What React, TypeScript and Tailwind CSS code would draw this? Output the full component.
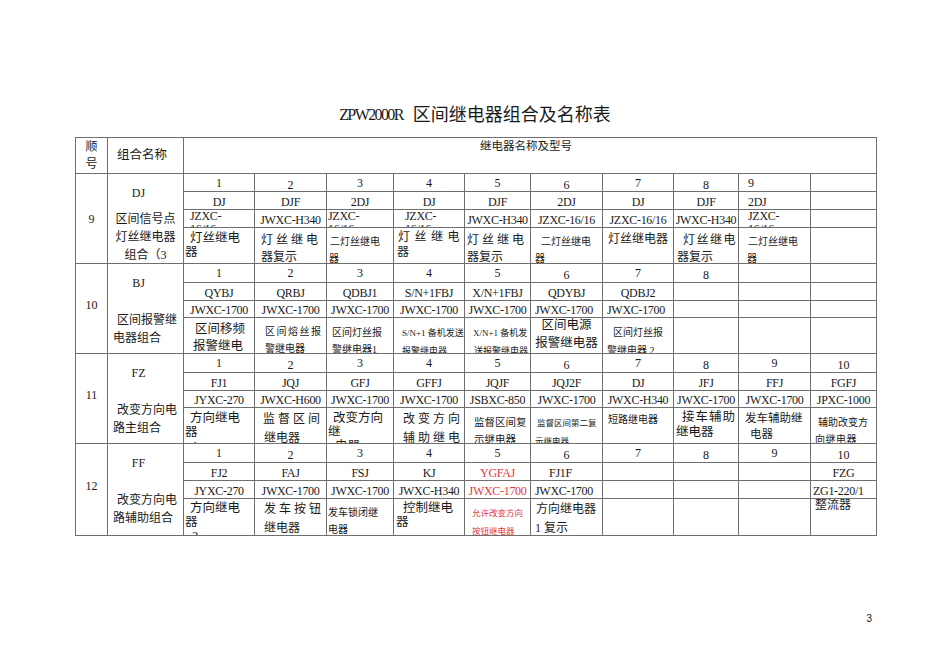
import React from "react";

type Cell = { t?: React.ReactNode; c?: string };

const B = "border-r border-b border-[#6f6f6f] overflow-hidden";
const RED = "text-[#e2383f]";

function NumCell({ t, c }: Cell) {
  return (
    <div className={`${B} flex text-[12px] leading-[14px] ${c ?? "items-center justify-center"}`}>{t}</div>
  );
}

function NameCell({ t, c }: Cell) {
  return (
    <div className={`${B} flex text-[12px] leading-[14px] tracking-[-0.3px] ${c ?? "items-end justify-center"}`}>
      {t}
    </div>
  );
}

function DescCell({ t }: Cell) {
  return <div className={`${B}`}>{t}</div>;
}

// JZXC-16/16 wrapping onto a clipped second line
const wrapModel = (pl: string): Cell => ({
  t: (
    <div className={`leading-[13px] ${pl}`}>
      <div>JZXC-</div>
      <div>16/16</div>
    </div>
  ),
  c: "items-start justify-start",
});

const low = "items-center justify-center pt-[4px]";

type Section = {
  no: string;
  noCls: string;
  code: string;
  name: React.ReactNode;
  nums: Cell[];
  names: Cell[];
  models: Cell[];
  descs: React.ReactNode[];
};

const n = (t: React.ReactNode, c?: string): Cell => ({ t, c });

const sections: Section[] = [
  {
    no: "9",
    noCls: "pt-[1px]",
    code: "DJ",
    name: (
      <div className="mt-[9px] text-center leading-[18px]">
        <div>区间信号点</div>
        <div>灯丝继电器</div>
        <div>组合（3</div>
      </div>
    ),
    nums: [n("1"), n("2", low), n("3"), n("4"), n("5"), n("6", low), n("7"), n("8", low), n("9", "items-center justify-start pl-[9px]"), n("")],
    names: [n("DJ"), n("DJF"), n("2DJ"), n("DJ"), n("DJF"), n("2DJ"), n("DJ"), n("DJF"), n("2DJ", "items-end justify-start pl-[9px]"), n("")],
    models: [
      wrapModel("pl-[6px]"),
      n("JWXC-H340"),
      wrapModel("pl-[1px]"),
      wrapModel("pl-[11px]"),
      n("JWXC-H340"),
      n("JZXC-16/16"),
      n("JZXC-16/16"),
      n("JWXC-H340"),
      wrapModel("pl-[9px]"),
      n(""),
    ],
    descs: [
      <div className="pt-[3px] text-[12.5px] leading-[14px]">
        <div className="pl-[6px]">灯丝继电</div>
        <div className="pl-[1px]">器</div>
      </div>,
      <div className="pt-[4px] pl-[6px] text-[12px] leading-[17px]">
        <div className="tracking-[3px]">灯丝继电</div>
        <div>器复示</div>
      </div>,
      <div className="pt-[5px] text-[10px] leading-[17px]">
        <div className="pl-[3px]">二灯丝继电</div>
        <div className="pl-[2px]">器</div>
      </div>,
      <div className="pt-[2px] text-[12px] leading-[15px]">
        <div className="pl-[4px] tracking-[4.5px]">灯丝继电</div>
        <div className="pl-[3px]">器</div>
      </div>,
      <div className="pt-[4px] pl-[2px] text-[12px] leading-[17px]">
        <div className="tracking-[3px]">灯丝继电</div>
        <div>器复示</div>
      </div>,
      <div className="pt-[5px] text-[10px] leading-[17px]">
        <div className="pl-[10px]">二灯丝继电</div>
        <div className="pl-[4px]">器</div>
      </div>,
      <div className="pt-[4px] pl-[5px] text-[12px] leading-[14px]">灯丝继电器</div>,
      <div className="pt-[4px] text-[12px] leading-[17px]">
        <div className="pl-[9px] tracking-[1.5px]">灯丝继电</div>
        <div className="pl-[3px]">器复示</div>
      </div>,
      <div className="pt-[5px] text-[10px] leading-[17px]">
        <div className="pl-[9px]">二灯丝继电</div>
        <div className="pl-[8px]">器</div>
      </div>,
      null,
    ],
  },
  {
    no: "10",
    noCls: "pb-[8px]",
    code: "BJ",
    name: (
      <div className="mt-[20px] leading-[18px]">
        <div className="pl-[9px]">区间报警继</div>
        <div className="pl-[5px]">电器组合</div>
      </div>
    ),
    nums: [n("1"), n("2"), n("3"), n("4"), n("5"), n("6", low), n("7"), n("8", low), n(""), n("")],
    names: [n("QYBJ"), n("QRBJ"), n("QDBJ1"), n("S/N+1FBJ"), n("X/N+1FBJ"), n("QDYBJ"), n("QDBJ2"), n(""), n(""), n("")],
    models: [
      n("JWXC-1700"),
      n("JWXC-1700"),
      n("JWXC-1700"),
      n("JWXC-1700"),
      n("JWXC-1700"),
      n("JWXC-1700", "items-end justify-start pl-[4px]"),
      n("JWXC-1700", "items-end justify-start pl-[4px]"),
      n(""),
      n(""),
      n(""),
    ],
    descs: [
      <div className="pt-[3px] text-[12.5px] leading-[17px]">
        <div className="pl-[11px]">区间移频</div>
        <div className="pl-[9px]">报警继电</div>
      </div>,
      <div className="pt-[5px] pl-[10px] text-[10px] leading-[17px]">
        <div className="tracking-[1.5px]">区间熔丝报</div>
        <div>警继电器</div>
      </div>,
      <div className="pt-[6px] pl-[5px] text-[10px] leading-[17px]">
        <div>区间灯丝报</div>
        <div>警继电器1</div>
      </div>,
      <div className="pt-[6px] pl-[8px] text-[9px] leading-[18px]">
        <div>S/N+1 备机发送</div>
        <div>报警继电器</div>
      </div>,
      <div className="pt-[6px] pl-[8px] text-[9px] leading-[18px]">
        <div>X/N+1 备机发</div>
        <div className="pl-[1px]">送报警继电器</div>
      </div>,
      <div className="-mt-[2px] text-center text-[12.5px] leading-[18px]">
        <div>区间电源</div>
        <div>报警继电器</div>
      </div>,
      <div className="pt-[6px] text-[10px] leading-[18px]">
        <div className="pl-[10px]">区间灯丝报</div>
        <div className="pl-[4px]">警继电器 2</div>
      </div>,
      null,
      null,
      null,
    ],
  },
  {
    no: "11",
    noCls: "pb-[8px]",
    code: "FZ",
    name: (
      <div className="mt-[20px] leading-[18px]">
        <div className="pl-[9px]">改变方向电</div>
        <div className="pl-[5px]">路主组合</div>
      </div>
    ),
    nums: [n("1"), n("2", low), n("3"), n("4"), n("5"), n("6", low), n("7"), n("8", low), n("9"), n("10", low)],
    names: [n("FJ1"), n("JQJ"), n("GFJ"), n("GFFJ"), n("JQJF"), n("JQJ2F"), n("DJ"), n("JFJ"), n("FFJ"), n("FGFJ")],
    models: [
      n("JYXC-270"),
      n("JWXC-H600"),
      n("JWXC-1700"),
      n("JWXC-1700"),
      n("JSBXC-850"),
      n("JWXC-1700"),
      n("JWXC-H340"),
      n("JWXC-1700"),
      n("JWXC-1700"),
      n("JPXC-1000"),
    ],
    descs: [
      <div className="pt-[3px] text-[12.5px] leading-[14px]">
        <div className="pl-[6px]">方向继电</div>
        <div className="pl-[1px]">器</div>
        <div className="pl-[8px]">1</div>
      </div>,
      <div className="pt-[2px] text-[12px] leading-[19px]">
        <div className="pl-[8px] tracking-[3px]">监督区间</div>
        <div className="pl-[9px]">继电器</div>
      </div>,
      <div className="pt-[3px] text-[12.5px] leading-[14px]">
        <div className="pl-[6px]">改变方向</div>
        <div className="pl-[1px]">继</div>
        <div className="pl-[8px]">电器</div>
      </div>,
      <div className="pt-[2px] pl-[9px] text-[12px] leading-[19px] tracking-[3px]">
        <div>改变方向</div>
        <div>辅助继电</div>
      </div>,
      <div className="pt-[6px] pl-[9px] text-[10.5px] leading-[17px]">
        <div>监督区间复</div>
        <div>示继电器</div>
      </div>,
      <div className="pt-[6px] text-[8.5px] leading-[18px]">
        <div className="pl-[6px]">监督区间第二复</div>
        <div className="pl-[4px]">示继电器</div>
      </div>,
      <div className="pt-[5px] pl-[5px] text-[10px] leading-[14px]">短路继电器</div>,
      <div className="pt-[2px] text-[12.5px] leading-[15px]">
        <div className="pl-[8px] tracking-[1px]">接车辅助</div>
        <div className="pl-[2px]">继电器</div>
      </div>,
      <div className="pt-[2px] text-[11.5px] leading-[16px]">
        <div className="pl-[6px]">发车辅助继</div>
        <div className="pl-[11px]">电器</div>
      </div>,
      <div className="pt-[6px] text-[10px] leading-[17px]">
        <div className="pl-[7px]">辅助改变方</div>
        <div className="pl-[4px] tracking-[0.5px]">向继电器</div>
      </div>,
    ],
  },
  {
    no: "12",
    noCls: "pb-[8px]",
    code: "FF",
    name: (
      <div className="mt-[20px] leading-[18px]">
        <div className="pl-[9px]">改变方向电</div>
        <div className="pl-[5px]">路辅助组合</div>
      </div>
    ),
    nums: [n("1"), n("2", low), n("3"), n("4"), n("5"), n("6", low), n("7"), n("8", low), n("9"), n("10", low)],
    names: [
      n("FJ2"),
      n("FAJ"),
      n("FSJ"),
      n("KJ"),
      n(<span className={RED}>YGFAJ</span>),
      n("FJ1F", "items-end justify-center pr-[12px]"),
      n(""),
      n(""),
      n(""),
      n("FZG"),
    ],
    models: [
      n("JYXC-270"),
      n("JWXC-1700"),
      n("JWXC-1700"),
      n("JWXC-H340"),
      n(<span className={RED}>JWXC-1700</span>),
      n("JWXC-1700", "items-end justify-start pl-[4px]"),
      n(""),
      n(""),
      n(""),
      n("ZG1-220/1", "items-end justify-start pl-[2px]"),
    ],
    descs: [
      <div className="pt-[2px] text-[12.5px] leading-[14px]">
        <div className="pl-[6px]">方向继电</div>
        <div className="pl-[1px]">器</div>
        <div className="pl-[8px]">2</div>
      </div>,
      <div className="pt-[1px] pl-[9px] text-[12px] leading-[19px]">
        <div className="tracking-[3px]">发车按钮</div>
        <div>继电器</div>
      </div>,
      <div className="pt-[5px] pl-[1px] text-[10px] leading-[17px]">
        <div>发车锁闭继</div>
        <div>电器</div>
      </div>,
      <div className="pt-[2px] text-[12.5px] leading-[14px]">
        <div className="pl-[9px]">控制继电</div>
        <div className="pl-[2px]">器</div>
      </div>,
      <div className={`pt-[5px] pl-[7px] text-[8.5px] leading-[18px] ${RED}`}>
        <div>允许改变方向</div>
        <div>按钮继电器</div>
      </div>,
      <div className="pt-[1px] text-[12px] leading-[19px]">
        <div className="pl-[5px]">方向继电器</div>
        <div className="pl-[4px]">1 复示</div>
      </div>,
      null,
      null,
      null,
      <div className="-mt-[1px] pl-[4px] text-[12px] leading-[14px]">整流器</div>,
    ],
  },
];

export default function App() {
  return (
    <div className="min-h-[672px] w-[950px] bg-white pt-[104px] font-['Liberation_Serif','Noto_Sans_CJK_SC',serif] text-[#1a1a1a]">
      <div className="mb-[11px] flex h-[22px] items-center justify-center text-[18px] leading-[22px]">
        <span className="mr-[10px] text-[16px] tracking-[-1.6px]">ZPW2000R</span>
        <span>区间继电器组合及名称表</span>
      </div>

      <div className="ml-[75px] grid w-[802px] grid-cols-[32px_76px_71px_72px_67px_71px_66px_72px_71px_65px_72px_66px] grid-rows-[36px_18px_18px_18px_36px_19px_18px_17px_36px_19px_18px_17px_36px_19px_18px_18px_37px] border-l border-t border-[#6f6f6f] text-[12px]">
        <div className={`${B} flex flex-col items-center justify-center leading-[17px]`}>
          <div>顺</div>
          <div>号</div>
        </div>
        <div className={`${B} flex items-center pl-[9px] text-[12.5px]`}>组合名称</div>
        <div className={`${B} col-span-10 pt-[1px] pr-[8px] text-center leading-[14px] text-[11.5px]`}>
          继电器名称及型号
        </div>

        {sections.map((s) => (
          <React.Fragment key={s.no}>
            <div className={`${B} row-span-4 flex items-center justify-center ${s.noCls}`}>{s.no}</div>
            <div className={`${B} row-span-4`}>
              <div className="pt-[11px] pr-[14px] text-center leading-[16px]">{s.code}</div>
              {s.name}
            </div>
            {s.nums.map((c, i) => (
              <NumCell key={"n" + i} {...c} />
            ))}
            {s.names.map((c, i) => (
              <NameCell key={"a" + i} {...c} />
            ))}
            {s.models.map((c, i) => (
              <NameCell key={"m" + i} {...c} />
            ))}
            {s.descs.map((d, i) => (
              <DescCell key={"d" + i} t={d} />
            ))}
          </React.Fragment>
        ))}
      </div>

      <div className="mt-[77px] flex justify-end pr-[78px] font-['Liberation_Sans',sans-serif] text-[10px] leading-[12px]">
        3
      </div>
    </div>
  );
}
